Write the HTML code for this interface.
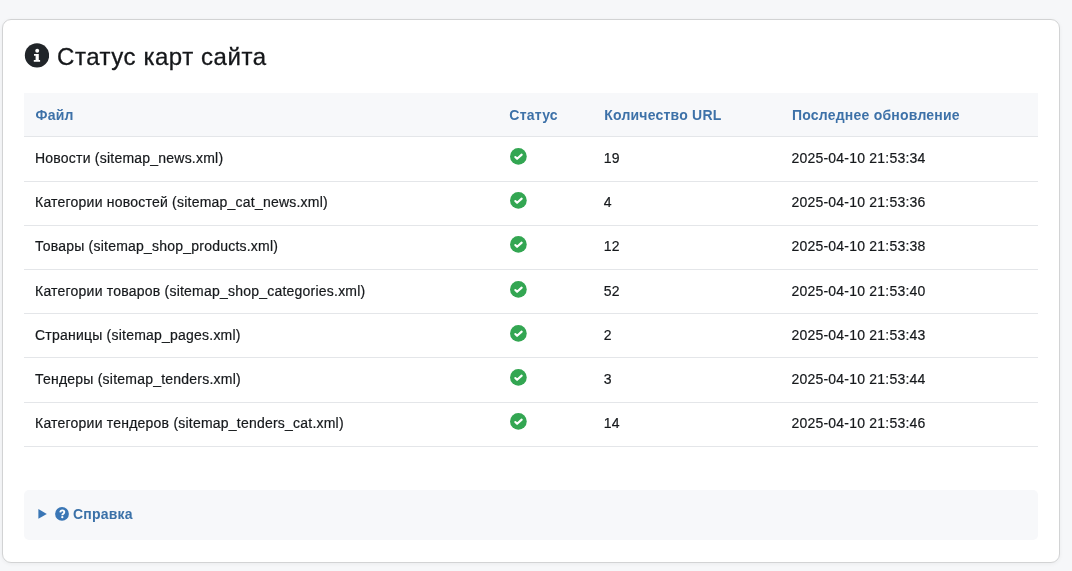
<!DOCTYPE html>
<html><head><meta charset="utf-8">
<style>
html,body{margin:0;padding:0;}
body{width:1072px;height:571px;background:#f6f7f9;font-family:"Liberation Sans",sans-serif;color:#212529;position:relative;overflow:hidden;}
.card{position:absolute;left:2px;top:19px;width:1056px;height:542px;background:#fff;border:1px solid #d2d3d4;border-radius:9px;box-shadow:0 1px 4px rgba(0,0,0,0.05);will-change:transform;}
h2{position:absolute;left:22px;top:22px;margin:0;font-size:24px;font-weight:normal;line-height:30px;white-space:nowrap;color:#15171a;}
h2 span{-webkit-text-stroke:0.3px #15171a;}
h2 svg{position:absolute;left:-1px;top:1px;}
h2 span{position:absolute;left:32px;top:0;letter-spacing:0.55px;}
table{position:absolute;left:21px;top:73px;width:1014px;border-collapse:collapse;font-size:14px;letter-spacing:0.22px;}
th{background:#f7f8fa;color:#3d71a8;font-weight:bold;text-align:left;height:43.4px;padding:0 0 0 11.5px;border-bottom:1px solid #e4e6e9;}
td{color:#16191c;-webkit-text-stroke:0.2px #16191c;height:41.2px;padding:0 0 2px 11px;border-bottom:1px solid #e4e6e9;}
.ok{position:relative;}
.chk{position:absolute;left:11.8px;top:10.7px;}
.help{position:absolute;left:21px;top:470px;width:1014px;height:50px;background:#f7f8fa;border-radius:5px;}
.help .tri{position:absolute;left:0;top:0;}
.help svg.q{position:absolute;left:31px;top:17px;}
.help span{position:absolute;left:49px;top:16px;font-weight:bold;font-size:14px;color:#3a71a8;line-height:17px;letter-spacing:0.2px;}
</style></head><body>
<div class="card">
<h2><svg width="25" height="25" viewBox="0 0 25 25"><circle cx="13" cy="12.4" r="12.15" fill="#212529"/><circle cx="13.2" cy="7.8" r="1.95" fill="#fff"/><path d="M10 10.9H14.8V16.9H16.1V18.8H9.8V16.9H11.6V12.8H10Z" fill="#fff"/></svg><span>Статус карт сайта</span></h2>
<table>
<colgroup><col style="width:474.6px"><col style="width:95px"><col style="width:188px"><col style="width:258px"></colgroup>
<tr><th>Файл</th><th>Статус</th><th>Количество URL</th><th>Последнее обновление</th></tr>
<tr><td>Новости (sitemap_news.xml)</td><td class="ok"><svg class="chk" width="17" height="17" viewBox="0 0 17 17"><circle cx="8.4" cy="8.45" r="8.35" fill="#33a652"/><path d="M5.3 9.0L7.1 10.8L11.7 6.6" fill="none" stroke="#fff" stroke-width="2.1" stroke-linecap="round" stroke-linejoin="round"/></svg></td><td>19</td><td>2025-04-10 21:53:34</td></tr>
<tr><td>Категории новостей (sitemap_cat_news.xml)</td><td class="ok"><svg class="chk" width="17" height="17" viewBox="0 0 17 17"><circle cx="8.4" cy="8.45" r="8.35" fill="#33a652"/><path d="M5.3 9.0L7.1 10.8L11.7 6.6" fill="none" stroke="#fff" stroke-width="2.1" stroke-linecap="round" stroke-linejoin="round"/></svg></td><td>4</td><td>2025-04-10 21:53:36</td></tr>
<tr><td>Товары (sitemap_shop_products.xml)</td><td class="ok"><svg class="chk" width="17" height="17" viewBox="0 0 17 17"><circle cx="8.4" cy="8.45" r="8.35" fill="#33a652"/><path d="M5.3 9.0L7.1 10.8L11.7 6.6" fill="none" stroke="#fff" stroke-width="2.1" stroke-linecap="round" stroke-linejoin="round"/></svg></td><td>12</td><td>2025-04-10 21:53:38</td></tr>
<tr><td>Категории товаров (sitemap_shop_categories.xml)</td><td class="ok"><svg class="chk" width="17" height="17" viewBox="0 0 17 17"><circle cx="8.4" cy="8.45" r="8.35" fill="#33a652"/><path d="M5.3 9.0L7.1 10.8L11.7 6.6" fill="none" stroke="#fff" stroke-width="2.1" stroke-linecap="round" stroke-linejoin="round"/></svg></td><td>52</td><td>2025-04-10 21:53:40</td></tr>
<tr><td>Страницы (sitemap_pages.xml)</td><td class="ok"><svg class="chk" width="17" height="17" viewBox="0 0 17 17"><circle cx="8.4" cy="8.45" r="8.35" fill="#33a652"/><path d="M5.3 9.0L7.1 10.8L11.7 6.6" fill="none" stroke="#fff" stroke-width="2.1" stroke-linecap="round" stroke-linejoin="round"/></svg></td><td>2</td><td>2025-04-10 21:53:43</td></tr>
<tr><td>Тендеры (sitemap_tenders.xml)</td><td class="ok"><svg class="chk" width="17" height="17" viewBox="0 0 17 17"><circle cx="8.4" cy="8.45" r="8.35" fill="#33a652"/><path d="M5.3 9.0L7.1 10.8L11.7 6.6" fill="none" stroke="#fff" stroke-width="2.1" stroke-linecap="round" stroke-linejoin="round"/></svg></td><td>3</td><td>2025-04-10 21:53:44</td></tr>
<tr><td>Категории тендеров (sitemap_tenders_cat.xml)</td><td class="ok"><svg class="chk" width="17" height="17" viewBox="0 0 17 17"><circle cx="8.4" cy="8.45" r="8.35" fill="#33a652"/><path d="M5.3 9.0L7.1 10.8L11.7 6.6" fill="none" stroke="#fff" stroke-width="2.1" stroke-linecap="round" stroke-linejoin="round"/></svg></td><td>14</td><td>2025-04-10 21:53:46</td></tr>
</table>
<div class="help"><svg class="tri" width="40" height="40" viewBox="0 0 40 40"><path d="M14.4 19.1L22.8 23.95L14.4 28.8Z" fill="#3a76b5"/></svg><svg class="q" width="14" height="14" viewBox="0 0 14 14"><circle cx="7" cy="6.9" r="6.9" fill="#3a76b5"/><path d="M5.3 5.3Q5.5 3.4 7.3 3.4Q9.3 3.4 9.3 5.1Q9.3 6.2 8.2 6.8Q7.3 7.3 7.3 8.3" fill="none" stroke="#fff" stroke-width="1.9"/><circle cx="7.3" cy="10.2" r="1.15" fill="#fff"/></svg><span>Справка</span></div>
</div>
</body></html>
